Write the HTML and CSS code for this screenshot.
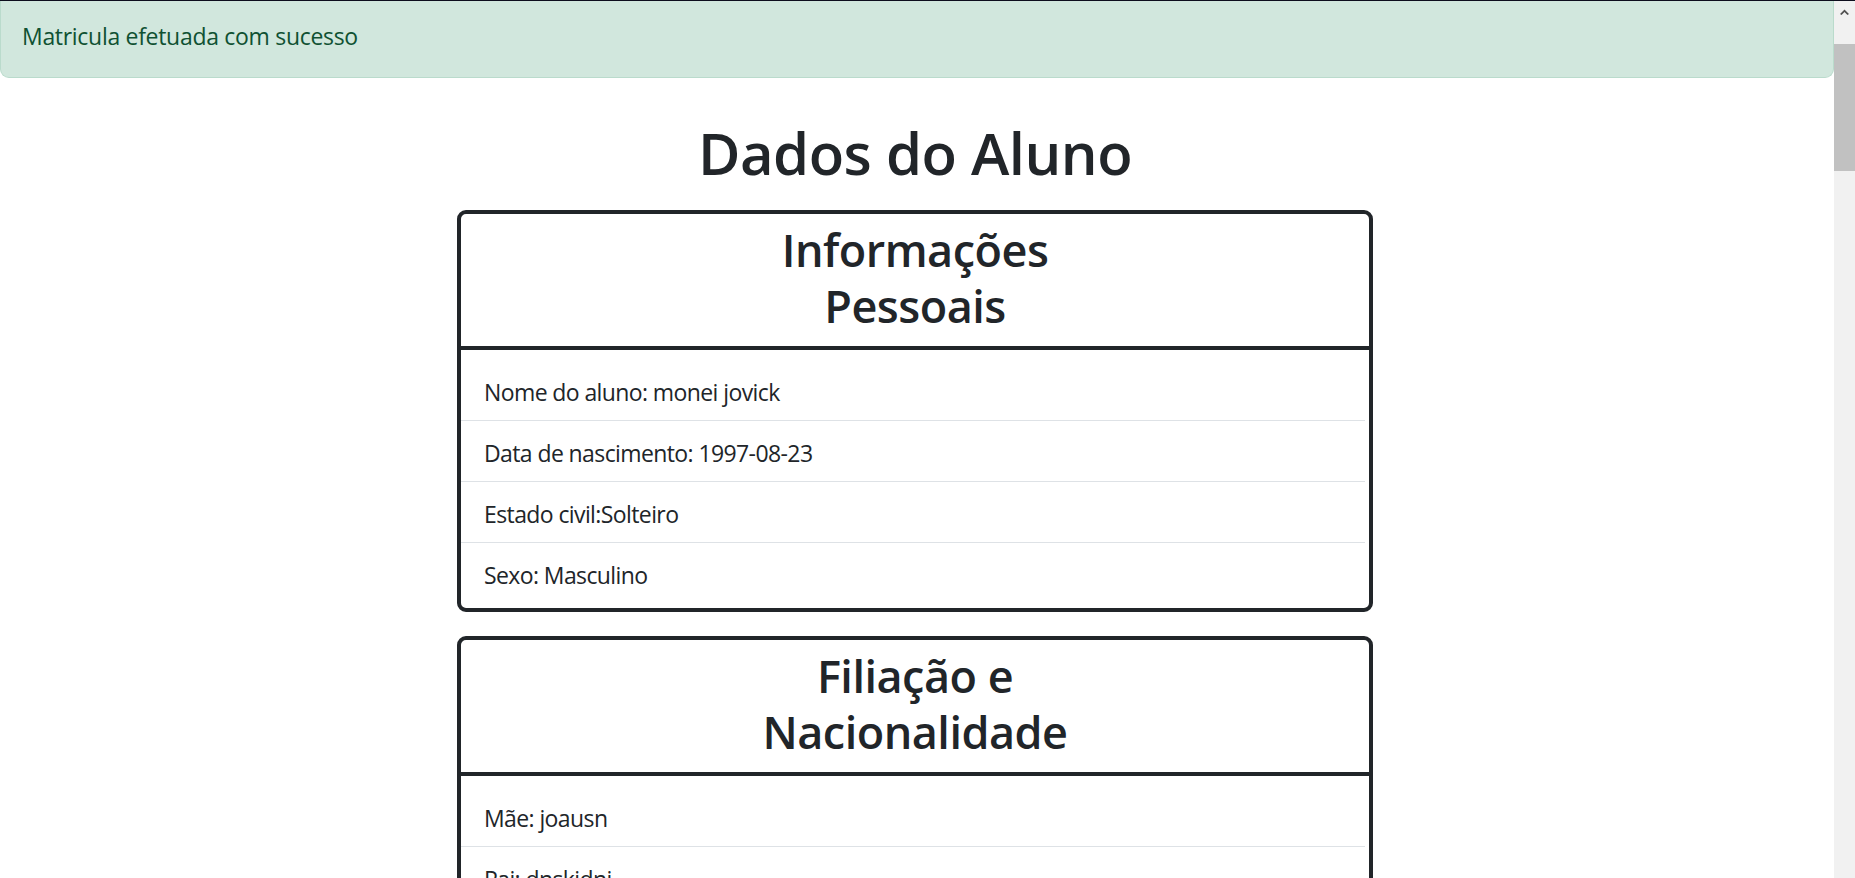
FILE: index.html
```html
<!DOCTYPE html>
<html lang="pt">
<head>
<meta charset="utf-8">
<title>Dados do Aluno</title>
<link rel="stylesheet" href="styles.css">
</head>
<body>
<div class="frame-top"></div>
<div class="window">
  <main class="page">
    <div class="alert">Matricula efetuada com sucesso</div>
    <div class="content">
      <h1 class="title">Dados do Aluno</h1>
      <section class="card">
        <div class="card-header"><h2 class="card-title">Informações Pessoais</h2></div>
        <div class="card-body">
          <ul class="list">
            <li class="item">Nome do aluno: monei jovick</li>
            <li class="item">Data de nascimento: 1997-08-23</li>
            <li class="item">Estado civil:Solteiro</li>
            <li class="item">Sexo: Masculino</li>
          </ul>
        </div>
      </section>
      <section class="card">
        <div class="card-header"><h2 class="card-title">Filiação e Nacionalidade</h2></div>
        <div class="card-body">
          <ul class="list">
            <li class="item">Mãe: joausn</li>
            <li class="item">Pai: dnskidni</li>
          </ul>
        </div>
      </section>
    </div>
  </main>
  <div class="scrollbar">
    <div class="scroll-btn">
      <svg width="9" height="6" viewBox="0 0 9 6"><path d="M0 5 L4.5 0.5 L9 5 L7.5 6 L4.5 3 L1.5 6 Z" fill="#505050"/></svg>
    </div>
    <div class="scroll-thumb"></div>
  </div>
</div>
</body>
</html>
```

FILE: styles.css
```css
* { box-sizing: border-box; }
html, body { margin: 0; padding: 0; }
body {
  height: 100vh;
  overflow: hidden;
  background: #fff;
  color: #212529;
  font-family: "Open Sans", "Noto Sans", sans-serif;
  display: flex;
  flex-direction: column;
}
.frame-top { height: 1px; background: #0d0d1d; flex: none; }
.window { flex: 1; display: flex; min-height: 0; }
.page { flex: 1; min-width: 0; overflow: hidden; }
.alert {
  background: #d1e7dd;
  color: #0f5132;
  border: 1px solid #badbcc;
  border-top: none;
  border-radius: 0 0 9px 9px;
  font-size: 23px;
  letter-spacing: -0.3px;
  line-height: 36px;
  padding: 17px 21px 23px 21px;
  height: 77px;
}
.content {
  display: flex;
  flex-direction: column;
  align-items: center;
  padding-right: 4px;
}
.title {
  margin: 39px 0 21px;
  font-size: 58px;
  line-height: 72px;
  font-weight: 600;
  letter-spacing: -0.5px;
}
.card {
  width: 916px;
  border: 4px solid #212529;
  border-radius: 9px;
  margin-bottom: 24px;
  flex: none;
}
.card-header {
  border-bottom: 4px solid #212529;
  padding: 8px 24px 12px;
  text-align: center;
}
.card-title {
  margin: 0 auto;
  max-width: 420px;
  font-size: 45px;
  line-height: 56px;
  font-weight: 600;
  letter-spacing: -0.5px;
}
.card-body { padding: 10px 4px 5px 0; }
.list { list-style: none; margin: 0; padding: 0; }
.item {
  font-size: 23px;
  letter-spacing: -0.6px;
  line-height: 36px;
  padding: 14px 23px 10px;
  border-bottom: 1px solid #dee2e6;
}
.item:last-child { border-bottom: none; }
.scrollbar {
  width: 21px;
  flex: none;
  background: #f1f1f1;
  display: flex;
  flex-direction: column;
}
.scroll-btn {
  height: 43px;
  display: flex;
  justify-content: center;
  padding-top: 8px;
}
.scroll-thumb { height: 127px; background: #c1c1c1; }
```
